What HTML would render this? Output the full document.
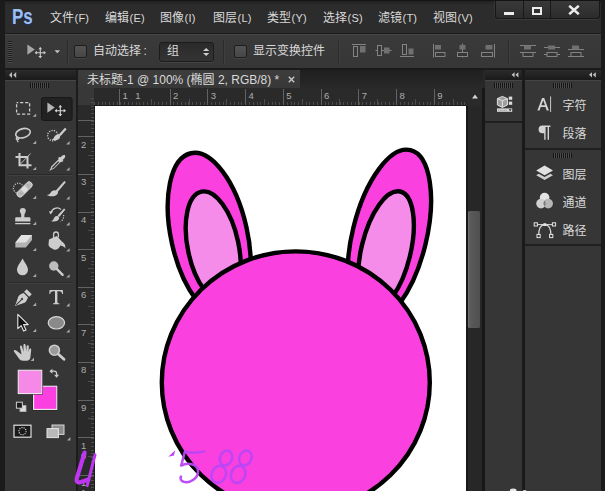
<!DOCTYPE html>
<html><head><meta charset="utf-8"><title>Photoshop</title><style>
html,body{margin:0;padding:0;}
body{width:605px;height:491px;overflow:hidden;background:#272727;position:relative;font-family:"Liberation Sans",sans-serif;font-size:12px;color:#d9d9d9;}
.a{position:absolute;}
svg{display:block;}
.cj{display:inline-block;vertical-align:top;font-family:"Liberation Sans","Noto Sans CJK SC",sans-serif;font-size:12px;color:#d9d9d9;}
.t{position:absolute;white-space:nowrap;line-height:14px;height:14px;}
.t span{display:inline-block;vertical-align:top;line-height:14px;}
.rl{position:absolute;font-size:9.5px;line-height:10px;color:#adadad;}
.cb{position:absolute;width:13px;height:13px;box-sizing:border-box;border:1px solid #1e1e1e;background:linear-gradient(#545454,#464646);border-radius:2px;box-shadow:0 1px 0 #444;}
</style></head><body>
<div class="a" style="left:0;top:0;width:605px;height:34px;background:linear-gradient(#1f1f1f,#2c2c2c 5px,#2c2c2c);"></div>
<div class="a" style="left:0;top:0;width:605px;height:1px;background:#141414;"></div>
<div class="a" style="left:5px;top:34px;width:596px;height:35px;background:linear-gradient(#3a3a3a,#363636);"></div>
<div class="a" style="left:0px;top:33px;width:605px;height:1px;background:#1a1a1a;"></div>
<div class="a" style="left:5px;top:34px;width:596px;height:1px;background:#474747;"></div>
<div class="a" style="left:0;top:68px;width:605px;height:2px;background:#1a1a1a;"></div>
<div class="a" style="left:0;top:0;width:5px;height:491px;background:#1b1b1b;"></div>
<div class="a" style="left:601px;top:0;width:4px;height:491px;background:#1b1b1b;"></div>
<div class="t" style="left:11.5px;top:4.5px;font-size:22px;font-weight:bold;color:#9cc0ee;text-shadow:1px 0.5px 0 #1c2e74;line-height:24px;height:24px;transform:scaleX(0.77);transform-origin:0 0;">Ps</div>
<div class="t" style="left:50px;top:11px;"><span class="cj">文件</span><span style="font-size:11px;letter-spacing:0.2px;padding-left:0.5px;">(F)</span></div>
<div class="t" style="left:105px;top:11px;"><span class="cj">编辑</span><span style="font-size:11px;letter-spacing:0.2px;padding-left:0.5px;">(E)</span></div>
<div class="t" style="left:160px;top:11px;"><span class="cj">图像</span><span style="font-size:11px;letter-spacing:0.2px;padding-left:0.5px;">(I)</span></div>
<div class="t" style="left:213px;top:11px;"><span class="cj">图层</span><span style="font-size:11px;letter-spacing:0.2px;padding-left:0.5px;">(L)</span></div>
<div class="t" style="left:267px;top:11px;"><span class="cj">类型</span><span style="font-size:11px;letter-spacing:0.2px;padding-left:0.5px;">(Y)</span></div>
<div class="t" style="left:323px;top:11px;"><span class="cj">选择</span><span style="font-size:11px;letter-spacing:0.2px;padding-left:0.5px;">(S)</span></div>
<div class="t" style="left:378px;top:11px;"><span class="cj">滤镜</span><span style="font-size:11px;letter-spacing:0.2px;padding-left:0.5px;">(T)</span></div>
<div class="t" style="left:433px;top:11px;"><span class="cj">视图</span><span style="font-size:11px;letter-spacing:0.2px;padding-left:0.5px;">(V)</span></div>
<div class="a" style="left:495px;top:1px;width:105px;height:18px;background:linear-gradient(#393939,#2c2c2c);border:1px solid #171717;border-top:none;border-radius:0 0 3px 3px;box-sizing:border-box;box-shadow:0 1px 0 #3a3a3a,-1px 0 0 #353535;"></div>
<div class="a" style="left:523px;top:1px;width:1px;height:17px;background:#181818;"></div>
<div class="a" style="left:550px;top:1px;width:1px;height:17px;background:#181818;"></div>
<div class="a" style="left:504px;top:12px;width:10px;height:3px;background:#ececec;"></div>
<div class="a" style="left:532px;top:7px;width:10px;height:8px;border:2px solid #ececec;box-sizing:border-box;"></div>
<svg class="a" style="left:568px;top:5px;" width="12" height="10" viewBox="0 0 12 10"><path d="M1.2 0.8 L10.8 9.2 M10.8 0.8 L1.2 9.2" stroke="#ececec" stroke-width="2.5" fill="none"/></svg>
<div class="a" style="left:8px;top:41px;width:4px;height:22px;background:repeating-linear-gradient(#1f1f1f 0,#1f1f1f 1px,#4a4a4a 1px,#4a4a4a 2px);"></div>
<div class="a" style="left:67px;top:40px;width:1px;height:24px;background:#2b2b2b;"></div>
<div class="a" style="left:68px;top:40px;width:1px;height:24px;background:#3f3f3f;"></div>
<div class="cb" style="left:74px;top:45px;"></div>
<div class="t" style="left:93px;top:44px;"><span class="cj">自动选择</span><span style="padding-left:2.5px;">:</span></div>
<div class="a" style="left:159px;top:42px;width:55px;height:20px;box-sizing:border-box;border:1px solid #1c1c1c;border-radius:3px;background:linear-gradient(#2a2a2a,#343434);box-shadow:0 1px 0 #444;"></div>
<div class="t" style="left:167px;top:44px;"><span class="cj">组</span></div>
<svg class="a" style="left:203px;top:48px;" width="6.4" height="8" viewBox="0 0 6.4 8"><path d="M3.2 0 L6.4 3 H0Z M3.2 8 L6.4 5 H0Z" fill="#cfcfcf"/></svg>
<div class="a" style="left:223px;top:40px;width:1px;height:24px;background:#2b2b2b;"></div>
<div class="a" style="left:224px;top:40px;width:1px;height:24px;background:#3f3f3f;"></div>
<div class="cb" style="left:234px;top:45px;"></div>
<div class="t" style="left:253px;top:44px;"><span class="cj">显示变换控件</span></div>
<div class="a" style="left:338px;top:40px;width:1px;height:24px;background:#2b2b2b;"></div>
<div class="a" style="left:339px;top:40px;width:1px;height:24px;background:#3f3f3f;"></div>
<div class="a" style="left:508px;top:40px;width:1px;height:24px;background:#2b2b2b;"></div>
<div class="a" style="left:509px;top:40px;width:1px;height:24px;background:#3f3f3f;"></div>
<div class="a" style="left:5px;top:70px;width:71px;height:421px;background:#363636;"></div>
<div class="a" style="left:5px;top:70px;width:71px;height:10px;background:linear-gradient(#2b2b2b,#1a1a1a);"></div>
<div class="a" style="left:76px;top:70px;width:2px;height:421px;background:#1c1c1c;"></div>
<div class="a" style="left:5px;top:80px;width:71px;height:1px;background:#454545;"></div>
<div class="a" style="left:30px;top:83px;width:19px;height:5px;background:repeating-linear-gradient(90deg,#141414 0,#141414 1px,#4c4c4c 1px,#4c4c4c 2px);"></div>
<div class="a" style="left:8px;top:174px;width:65px;height:1px;background:#2a2a2a;"></div>
<div class="a" style="left:8px;top:175px;width:65px;height:1px;background:#414141;"></div>
<div class="a" style="left:8px;top:282px;width:65px;height:1px;background:#2a2a2a;"></div>
<div class="a" style="left:8px;top:283px;width:65px;height:1px;background:#414141;"></div>
<div class="a" style="left:8px;top:338px;width:65px;height:1px;background:#2a2a2a;"></div>
<div class="a" style="left:8px;top:339px;width:65px;height:1px;background:#414141;"></div>
<div class="a" style="left:78px;top:70px;width:405px;height:18px;background:linear-gradient(#1f1f1f,#292929);"></div>
<div class="a" style="left:78px;top:70px;width:222px;height:18px;background:linear-gradient(#3d3d3d,#383838);"></div>
<div class="t" style="left:87px;top:72.6px;"><span class="cj">未标题</span><span>-1 @ 100% (</span><span class="cj">椭圆</span><span>&nbsp;2, RGB/8) *</span></div>
<svg class="a" style="left:288px;top:75.5px;" width="7" height="7" viewBox="0 0 7 7"><path d="M0.8 0.8 L6.2 6.2 M6.2 0.8 L0.8 6.2" stroke="#cacaca" stroke-width="1.3" fill="none"/></svg>
<div class="a" style="left:78px;top:88px;width:388px;height:17px;background:#2a2a2a;"></div>
<div class="a" style="left:78px;top:105px;width:16px;height:386px;background:#2a2a2a;"></div>
<div class="a" style="left:78px;top:88px;width:16px;height:17px;background:#383838;"></div>
<div class="a" style="left:94px;top:102px;width:372px;height:3px;background:repeating-linear-gradient(90deg,#4c4c4c 0,#4c4c4c 1px,transparent 1px,transparent 3.78px);"></div>
<div class="a" style="left:91px;top:98.4px;width:3px;height:393px;background:repeating-linear-gradient(#4c4c4c 0,#4c4c4c 1px,transparent 1px,transparent 3.78px);"></div>
<div class="rl" style="left:135.3px;top:91px;">1</div>
<div class="a" style="left:150.7px;top:99px;width:1px;height:6px;background:#4c4c4c;"></div>
<div class="a" style="left:169.6px;top:89px;width:1px;height:16px;background:#626262;"></div>
<div class="rl" style="left:173.1px;top:91px;">2</div>
<div class="a" style="left:188.5px;top:99px;width:1px;height:6px;background:#4c4c4c;"></div>
<div class="a" style="left:207.3px;top:89px;width:1px;height:16px;background:#626262;"></div>
<div class="rl" style="left:210.8px;top:91px;">3</div>
<div class="a" style="left:226.2px;top:99px;width:1px;height:6px;background:#4c4c4c;"></div>
<div class="a" style="left:245.1px;top:89px;width:1px;height:16px;background:#626262;"></div>
<div class="rl" style="left:248.6px;top:91px;">4</div>
<div class="a" style="left:263.9px;top:99px;width:1px;height:6px;background:#4c4c4c;"></div>
<div class="a" style="left:282.8px;top:89px;width:1px;height:16px;background:#626262;"></div>
<div class="rl" style="left:286.3px;top:91px;">5</div>
<div class="a" style="left:301.7px;top:99px;width:1px;height:6px;background:#4c4c4c;"></div>
<div class="a" style="left:320.6px;top:89px;width:1px;height:16px;background:#626262;"></div>
<div class="rl" style="left:324.1px;top:91px;">6</div>
<div class="a" style="left:339.4px;top:99px;width:1px;height:6px;background:#4c4c4c;"></div>
<div class="a" style="left:358.3px;top:89px;width:1px;height:16px;background:#626262;"></div>
<div class="rl" style="left:361.8px;top:91px;">7</div>
<div class="a" style="left:377.2px;top:99px;width:1px;height:6px;background:#4c4c4c;"></div>
<div class="a" style="left:396.1px;top:89px;width:1px;height:16px;background:#626262;"></div>
<div class="rl" style="left:399.6px;top:91px;">8</div>
<div class="a" style="left:414.9px;top:99px;width:1px;height:6px;background:#4c4c4c;"></div>
<div class="a" style="left:433.8px;top:89px;width:1px;height:16px;background:#626262;"></div>
<div class="rl" style="left:437.3px;top:91px;">9</div>
<div class="a" style="left:452.7px;top:99px;width:1px;height:6px;background:#4c4c4c;"></div>
<div class="a" style="left:119.4px;top:89px;width:1px;height:16px;background:#626262;"></div>
<div class="rl" style="left:122.5px;top:91px;">1</div>
<div class="a" style="left:78px;top:136.3px;width:16px;height:1px;background:#626262;"></div>
<div class="rl" style="left:81px;top:139.8px;">2</div>
<div class="a" style="left:88px;top:155.2px;width:6px;height:1px;background:#4c4c4c;"></div>
<div class="a" style="left:78px;top:173.9px;width:16px;height:1px;background:#626262;"></div>
<div class="rl" style="left:81px;top:177.4px;">3</div>
<div class="a" style="left:88px;top:192.8px;width:6px;height:1px;background:#4c4c4c;"></div>
<div class="a" style="left:78px;top:211.5px;width:16px;height:1px;background:#626262;"></div>
<div class="rl" style="left:81px;top:215.0px;">4</div>
<div class="a" style="left:88px;top:230.4px;width:6px;height:1px;background:#4c4c4c;"></div>
<div class="a" style="left:78px;top:249.1px;width:16px;height:1px;background:#626262;"></div>
<div class="rl" style="left:81px;top:252.6px;">5</div>
<div class="a" style="left:88px;top:268.0px;width:6px;height:1px;background:#4c4c4c;"></div>
<div class="a" style="left:78px;top:286.7px;width:16px;height:1px;background:#626262;"></div>
<div class="rl" style="left:81px;top:290.2px;">6</div>
<div class="a" style="left:88px;top:305.6px;width:6px;height:1px;background:#4c4c4c;"></div>
<div class="a" style="left:78px;top:324.3px;width:16px;height:1px;background:#626262;"></div>
<div class="rl" style="left:81px;top:327.8px;">7</div>
<div class="a" style="left:88px;top:343.2px;width:6px;height:1px;background:#4c4c4c;"></div>
<div class="a" style="left:78px;top:361.9px;width:16px;height:1px;background:#626262;"></div>
<div class="rl" style="left:81px;top:365.4px;">8</div>
<div class="a" style="left:88px;top:380.8px;width:6px;height:1px;background:#4c4c4c;"></div>
<div class="a" style="left:78px;top:399.5px;width:16px;height:1px;background:#626262;"></div>
<div class="rl" style="left:81px;top:403.0px;">9</div>
<div class="a" style="left:88px;top:418.4px;width:6px;height:1px;background:#4c4c4c;"></div>
<div class="a" style="left:78px;top:437.1px;width:16px;height:1px;background:#626262;"></div>
<div class="rl" style="left:81px;top:440.6px;">1</div>
<div class="rl" style="left:81px;top:450.6px;">0</div>
<div class="a" style="left:88px;top:456.0px;width:6px;height:1px;background:#4c4c4c;"></div>
<div class="a" style="left:78px;top:474.7px;width:16px;height:1px;background:#626262;"></div>
<div class="rl" style="left:81px;top:478.2px;">1</div>
<div class="rl" style="left:81px;top:488.2px;">1</div>
<div class="a" style="left:88px;top:493.6px;width:6px;height:1px;background:#4c4c4c;"></div>
<div class="a" style="left:78px;top:120.4px;width:16px;height:1px;background:#626262;"></div>
<div class="a" style="left:93.6px;top:104.7px;width:372.2px;height:387px;background:#1b1b1b;"></div>
<div class="a" style="left:94.6px;top:105.7px;width:371.2px;height:386px;background:#fff;"></div>
<div class="a" style="left:465.8px;top:88px;width:19.2px;height:403px;background:#181818;"></div>
<div class="a" style="left:467.8px;top:88px;width:14.7px;height:403px;background:#272727;"></div>
<div class="a" style="left:465.8px;top:88px;width:16.7px;height:17.5px;background:#2a2a2a;"></div>
<svg class="a" style="left:472px;top:93.8px;" width="6" height="5" viewBox="0 0 6 5"><path d="M3 0.6 L6 4.4 H0Z" fill="#d4d4d4"/></svg>
<div class="a" style="left:468px;top:211px;width:12px;height:117px;background:linear-gradient(90deg,#717171,#5a5a5a 18%,#505050);border-radius:1.5px;"></div>
<div class="a" style="left:485px;top:70px;width:36.5px;height:421px;background:#363636;"></div>
<div class="a" style="left:485px;top:70px;width:36.5px;height:10px;background:linear-gradient(#2b2b2b,#1a1a1a);"></div>
<div class="a" style="left:521.5px;top:70px;width:3.5px;height:421px;background:#1a1a1a;"></div>
<div class="a" style="left:525px;top:70px;width:76px;height:421px;background:#363636;"></div>
<div class="a" style="left:525px;top:70px;width:76px;height:10px;background:linear-gradient(#2b2b2b,#1a1a1a);"></div>
<div class="a" style="left:485.0px;top:80px;width:36.5px;height:1px;background:#454545;"></div>
<div class="a" style="left:525.0px;top:80px;width:76.0px;height:1px;background:#454545;"></div>
<div class="a" style="left:494px;top:83px;width:19px;height:5px;background:repeating-linear-gradient(90deg,#141414 0,#141414 1px,#4c4c4c 1px,#4c4c4c 2px);"></div>
<div class="a" style="left:553px;top:83px;width:19px;height:5px;background:repeating-linear-gradient(90deg,#141414 0,#141414 1px,#4c4c4c 1px,#4c4c4c 2px);"></div>
<div class="a" style="left:553px;top:152.5px;width:19px;height:5px;background:repeating-linear-gradient(90deg,#141414 0,#141414 1px,#4c4c4c 1px,#4c4c4c 2px);"></div>
<div class="a" style="left:485px;top:121px;width:36.5px;height:2px;background:#1f1f1f;"></div>
<div class="a" style="left:525px;top:148px;width:76px;height:2px;background:#1f1f1f;"></div>
<div class="a" style="left:525px;top:244px;width:76px;height:2px;background:#1f1f1f;"></div>
<div class="t" style="left:562.5px;top:99px;"><span class="cj">字符</span></div>
<div class="t" style="left:562.5px;top:127px;"><span class="cj">段落</span></div>
<div class="t" style="left:562.5px;top:168px;"><span class="cj">图层</span></div>
<div class="t" style="left:562.5px;top:196px;"><span class="cj">通道</span></div>
<div class="t" style="left:562.5px;top:224px;"><span class="cj">路径</span></div>
<svg class="a" style="left:94px;top:105px;" width="371.8" height="386" viewBox="94 105 371.8 386">
<g stroke="#000" stroke-width="4.4">
<ellipse cx="209.2" cy="235.4" rx="38.1" ry="84.2" fill="#fb40e0" transform="rotate(-12.6 209.2 235.4)"/>
<ellipse cx="213.2" cy="246.8" rx="25.4" ry="56.4" fill="#f68ce9" transform="rotate(-12 213.2 246.8)"/>
<ellipse cx="389.4" cy="236.1" rx="37" ry="88.5" fill="#fb40e0" transform="rotate(13.8 389.4 236.1)"/>
<ellipse cx="386" cy="250.4" rx="24.6" ry="60.6" fill="#f68ce9" transform="rotate(13.6 386 250.4)"/>
<ellipse cx="295.8" cy="382.4" rx="134" ry="131" fill="#fb40e0"/>
</g></svg>
<svg class="a" style="left:0;top:0;" width="605" height="491" viewBox="0 0 605 491">
<path d="M27.4 44.4 v10.4 l7.4 -5.2z" fill="#a6a6a6"/><path d="M35.3 52.7 h10 M40.3 47.7 v10" stroke="#cccccc" stroke-width="1.1" fill="none"/><path d="M40.3 47.1 l1.9 2.2 h-3.8z M40.3 58.300000000000004 l1.9 -2.2 h-3.8z M34.699999999999996 52.7 l2.2 -1.9 v3.8z M45.9 52.7 l-2.2 -1.9 v3.8z" fill="#cccccc"/><path d="M54.5 50.2 h5.6 l-2.8 3z" fill="#c4c4c4"/><path d="M352 44.5 h14" fill="none" stroke="#838383" stroke-width="1"/><rect x="353.5" y="46.5" width="4" height="10" fill="none" stroke="#838383" stroke-width="1"/><rect x="360" y="46" width="5.5" height="6.5" fill="#707070"/><path d="M375.5 50.5 h16" fill="none" stroke="#838383" stroke-width="1"/><rect x="377.5" y="45.5" width="4" height="10" fill="#363636" stroke="#838383"/><rect x="384" y="47.5" width="5.5" height="6" fill="#707070"/><path d="M400 56.5 h14" fill="none" stroke="#838383" stroke-width="1"/><rect x="402.5" y="44.5" width="4" height="10" fill="none" stroke="#838383" stroke-width="1"/><rect x="408.5" y="48.5" width="5" height="6" fill="#707070"/><path d="M433.5 44 v13.5" fill="none" stroke="#838383" stroke-width="1"/><rect x="435" y="45" width="6" height="4.5" fill="#707070"/><rect x="435.5" y="52.5" width="9.5" height="4" fill="none" stroke="#838383" stroke-width="1"/><path d="M462.5 43.5 v14" fill="none" stroke="#838383" stroke-width="1"/><rect x="459.5" y="45" width="6" height="4.5" fill="#707070"/><rect x="457.5" y="52.5" width="10" height="4" fill="#363636" stroke="#838383"/><path d="M494.5 44 v13.5" fill="none" stroke="#838383" stroke-width="1"/><rect x="485.5" y="45" width="7" height="4.5" fill="#707070"/><rect x="481.5" y="52.5" width="11" height="4" fill="none" stroke="#838383" stroke-width="1"/><path d="M520 45.5 h16 M520 52.5 h16" fill="none" stroke="#838383" stroke-width="1"/><rect x="524" y="45.5" width="7" height="4" fill="#707070"/><rect x="523.0" y="52.5" width="10" height="4" fill="#363636" stroke="#838383"/><path d="M544 47.5 h16 M544 54.5 h16" fill="none" stroke="#838383" stroke-width="1"/><rect x="548" y="45.5" width="7" height="4" fill="#707070"/><rect x="547.0" y="52.5" width="10" height="4" fill="#363636" stroke="#838383"/><path d="M568 49.5 h16 M568 56.5 h16" fill="none" stroke="#838383" stroke-width="1"/><rect x="572" y="45.5" width="7" height="4" fill="#707070"/><rect x="571.0" y="52.5" width="10" height="4" fill="#363636" stroke="#838383"/>
<path d="M9 75 l3 -3 v6z M13.2 75 l3 -3 v6z" fill="#bdbdbd"/><rect x="41.5" y="97.5" width="30.6" height="23" rx="2" fill="#222222" stroke="#181818"/><rect x="16.6" y="102.6" width="13" height="11.6" fill="none" stroke="#cdcdcd" stroke-width="1.3" stroke-dasharray="3.2 1.9" stroke-dashoffset="1.6"/><path d="M47.4 102.4 v10.4 l7.4 -5.2z" fill="#b4b4b4"/><path d="M55.3 110.7 h10 M60.3 105.7 v10" stroke="#d6d6d6" stroke-width="1.1" fill="none"/><path d="M60.3 105.10000000000001 l1.9 2.2 h-3.8z M60.3 116.3 l1.9 -2.2 h-3.8z M54.699999999999996 110.7 l2.2 -1.9 v3.8z M65.89999999999999 110.7 l-2.2 -1.9 v3.8z" fill="#d6d6d6"/><g fill="none" stroke="#cdcdcd" stroke-width="1.6"><ellipse cx="23" cy="133.2" rx="7.5" ry="4.5" transform="rotate(-16 23 133.2)"/><path d="M17 137.2 c-1.6 1.2 -0.6 3 1 2.4 c1.4 -0.6 0.6 -2.4 -0.8 -1.6 c-0.8 0.8 0 2.8 1.2 4.2" stroke-width="1.2"/></g><circle cx="52.8" cy="135.6" r="5.2" fill="none" stroke="#cdcdcd" stroke-width="1.3" stroke-dasharray="1.2 1.3"/><path d="M66.6 129.2 l-1.6 -1.4 l-6.2 6.6 l1.8 1.6z" fill="#cdcdcd"/><path d="M58.4 134.4 c-2.4 -0.2 -3.8 1.4 -4.4 3.2 c-0.4 1.2 -1.4 1.8 -2.8 2 c3 1.4 7 1 8.6 -1.6 c0.6 -1.2 0.4 -2.6 -0.4 -3.4z" fill="#cdcdcd"/><path d="M19.5 153 v12.2 h12 M15.5 157 h12 v11.6" fill="none" stroke="#cdcdcd" stroke-width="2"/><path d="M30.5 153.6 l-10.6 11" stroke="#cdcdcd" stroke-width="0.9"/><path d="M64.4 154.4 c1.2 1.2 1 2.8 -0.2 4 l-1.6 1.6 l0.8 0.8 l-1.4 1.4 l-0.8 -0.8 l-7.6 7.6 l-2.4 0.8 l-1.2 1 l-0.6 -0.6 l1 -1.2 l0.8 -2.4 l7.6 -7.6 l-0.8 -0.8 l1.4 -1.4 l0.8 0.8 l1.6 -1.6 c1.2 -1.2 2.8 -1.4 3.6 -0.6z" fill="#cdcdcd"/><path d="M58.2 161.2 l-6 6 l-0.5 1.6 l1.6 -0.5 l6 -6z" fill="#3a3a3a"/><circle cx="18.4" cy="188.2" r="5" fill="none" stroke="#cdcdcd" stroke-width="1.2" stroke-dasharray="1.1 1.3"/><g transform="rotate(-45 24.5 189.4)"><rect x="15" y="186.4" width="19" height="6.2" rx="3" fill="#bcbcbc" stroke="#e0e0e0" stroke-width="0.8"/><rect x="22" y="186.8" width="5" height="5.4" fill="#dedede"/><path d="M17 188.5 h3 M17.5 190.5 h3 M29 188.5 h3 M28.5 190.5 h3" stroke="#777" stroke-width="0.7" stroke-dasharray="0.8 0.8"/></g><path d="M65.8 182.2 l-1.5 -1.3 l-8.4 9.6 l1.7 1.5z" fill="#cdcdcd"/><path d="M55.8 190.4 c-2.4 -0.5 -4.4 0.7 -5.2 2.4 c-0.6 1.3 -1.8 2 -3.8 2.2 c3.4 2 8.8 1.8 10.8 -1.3 c0.8 -1.2 0.4 -2.6 -0.5 -3.4z" fill="#cdcdcd"/><path d="M22.8 208 a3 3 0 0 1 3 3 c0 1.6 -1.4 2.4 -1.4 4.2 v2 h5 a1 1 0 0 1 1 1 v3.2 h-15.2 v-3.2 a1 1 0 0 1 1 -1 h5 v-2 c0 -1.8 -1.4 -2.6 -1.4 -4.2 a3 3 0 0 1 3 -3z" fill="#cdcdcd"/><path d="M15.2 223.6 h15.2" stroke="#cdcdcd" stroke-width="1.3"/><path d="M65.4 209.6 l-1.4 -1.2 l-6.4 7.2 l1.6 1.4z" fill="#cdcdcd"/><path d="M57 216 c-2 0 -3 1.5 -3.4 3 c-0.3 1.1 -1.2 1.7 -2.6 1.9 c2.6 1.2 6.4 0.8 7.8 -1.6 c0.6 -1.1 0.2 -2.3 -0.6 -3z" fill="#cdcdcd"/><path d="M51 213 a6.2 6.2 0 0 1 10 -3.6" fill="none" stroke="#cdcdcd" stroke-width="1.3"/><path d="M49 211.2 l4 0.2 l-2.6 3.2z" fill="#cdcdcd"/><path d="M63.6 215 a6.4 6.4 0 0 1 -3 6.6" fill="none" stroke="#cdcdcd" stroke-width="1.2" stroke-dasharray="1.2 1.2"/><path d="M21.4 235 h10.6 v5 l-6.2 7.6 h-10.4 v-5z" fill="#b4b4b4"/><path d="M21.4 235 h10.6 l-6.2 7.6 h-10.4z" fill="#e2e2e2"/><path d="M49 239.6 l7.8 -3.6 l6 6.4 l-4.4 6.2 c-1.2 1.2 -3 1.4 -4.6 0.8 l-3.6 -2 c-1.4 -1 -2 -2.6 -1.6 -4.2z" fill="#cdcdcd"/><path d="M53.6 239 v-4.6 a2.4 2.4 0 0 1 4.8 0 v3" fill="none" stroke="#cdcdcd" stroke-width="1.3"/><path d="M62 242 c2 0.6 3.6 2.6 3.4 6.2 c-1.4 -1.6 -2.6 -2.2 -4.6 -2.4z" fill="#cdcdcd"/><path d="M22.6 258.4 c1.6 3.6 5.4 7.4 5.4 11.4 a5.5 5.5 0 0 1 -11 0 c0 -4 3.8 -7.8 5.6 -11.4z" fill="#cdcdcd"/><circle cx="53.8" cy="266" r="4.7" fill="#bdbdbd"/><path d="M57 269.2 l5.6 5.6" stroke="#cdcdcd" stroke-width="2.4" stroke-linecap="round"/><g transform="rotate(45 24 297)"><path d="M24 309.6 l-4.4 -9 c-0.6 -2 0.4 -4.4 1.4 -6.2 h6 c1 1.8 2 4.2 1.4 6.2z" fill="#cdcdcd"/><path d="M24 308 v-7.4" stroke="#363636" stroke-width="1"/><circle cx="24" cy="299.8" r="1.1" fill="#363636"/><rect x="20.4" y="289.6" width="7.2" height="3.6" fill="#cdcdcd"/></g><path d="M49.6 290 h13.2 l0.3 4 h-0.9 c-0.3 -2 -1 -2.8 -3 -2.8 h-1.8 v10.6 c0 1.2 0.5 1.5 2 1.6 v0.8 h-6.4 v-0.8 c1.5 -0.1 2 -0.4 2 -1.6 v-10.6 h-1.8 c-2 0 -2.7 0.8 -3 2.8 h-0.9z" fill="#cdcdcd"/><path d="M17.8 314.4 v14.2 l3.4 -3 l2.4 5.4 l2.4 -1 l-2.4 -5.4 h4.6z" fill="#141414" stroke="#e6e6e6" stroke-width="1.1" stroke-linejoin="round"/><ellipse cx="56.4" cy="322.8" rx="8.2" ry="6.2" fill="#8a8a8a" stroke="#d8d8d8" stroke-width="1.2"/><path d="M17.6 351.6 c-1.2 -1.4 -2.8 -2.2 -3.6 -1.4 c-0.6 0.8 0.4 1.8 1.4 3.2 l3.6 5.2 c1 1.4 2.2 2.2 4 2.2 h3.6 c2.2 0 3.6 -1.4 3.8 -3.6 l0.8 -7.2 c0.2 -1.6 -1.6 -2 -2 -0.4 l-0.6 3 l0.2 -6.2 c0 -1.6 -2 -1.6 -2.2 0 l-0.4 5.2 l-0.6 -6.6 c-0.2 -1.6 -2.2 -1.4 -2.2 0.2 l0.2 6.6 l-1.6 -5.4 c-0.4 -1.6 -2.4 -1 -2 0.6 l1.6 7.4z" fill="#cdcdcd"/><circle cx="54.4" cy="350.2" r="5" fill="#9a9a9a" stroke="#cdcdcd" stroke-width="1.6"/><path d="M58.4 354.2 l5.6 5" stroke="#cdcdcd" stroke-width="2.8" stroke-linecap="round"/><path d="M36.2 116.8 v-3.4 l-3.4 3.4z" fill="#a9a9a9"/><path d="M36.2 143.9 v-3.4 l-3.4 3.4z" fill="#a9a9a9"/><path d="M69.6 144.4 v-3.4 l-3.4 3.4z" fill="#a9a9a9"/><path d="M36.2 170.1 v-3.4 l-3.4 3.4z" fill="#a9a9a9"/><path d="M69.6 170.6 v-3.4 l-3.4 3.4z" fill="#a9a9a9"/><path d="M36.2 198.9 v-3.4 l-3.4 3.4z" fill="#a9a9a9"/><path d="M69.6 199.4 v-3.4 l-3.4 3.4z" fill="#a9a9a9"/><path d="M36.2 224.9 v-3.4 l-3.4 3.4z" fill="#a9a9a9"/><path d="M69.6 225.4 v-3.4 l-3.4 3.4z" fill="#a9a9a9"/><path d="M36.2 251.1 v-3.4 l-3.4 3.4z" fill="#a9a9a9"/><path d="M69.6 251.6 v-3.4 l-3.4 3.4z" fill="#a9a9a9"/><path d="M36.2 277.1 v-3.4 l-3.4 3.4z" fill="#a9a9a9"/><path d="M69.6 277.6 v-3.4 l-3.4 3.4z" fill="#a9a9a9"/><path d="M36.2 305.9 v-3.4 l-3.4 3.4z" fill="#a9a9a9"/><path d="M69.6 306.4 v-3.4 l-3.4 3.4z" fill="#a9a9a9"/><path d="M36.2 332.1 v-3.4 l-3.4 3.4z" fill="#a9a9a9"/><path d="M69.6 332.6 v-3.4 l-3.4 3.4z" fill="#a9a9a9"/><path d="M34.0 361.0 v-3.4 l-3.4 3.4z" fill="#a9a9a9"/><rect x="32.6" y="385.2" width="25.2" height="25.2" fill="#1c1c1c"/><rect x="33.6" y="386.2" width="23.2" height="23.2" fill="#fb3fe1" stroke="#ededed" stroke-width="1.1"/><rect x="17.2" y="369.2" width="25.6" height="25.4" fill="#1c1c1c"/><rect x="18.2" y="370.2" width="23.6" height="23.4" fill="#f688e8" stroke="#ededed" stroke-width="1.1"/><path d="M51.6 371.2 h2.6 a2.4 2.4 0 0 1 2.4 2.4 v2" fill="none" stroke="#cdcdcd" stroke-width="1.2"/><path d="M49.4 371.2 l3 -2.5 v5z M56.6 377.8 l-2.5 -3 h5z" fill="#cdcdcd"/><rect x="20" y="405.6" width="6" height="6" fill="#dcdcdc" stroke="#b4b4b4" stroke-width="0.8"/><rect x="16.4" y="402.2" width="6" height="6" fill="#1c1c1c" stroke="#cfcfcf" stroke-width="1"/><rect x="14" y="425.2" width="17" height="12" fill="#1a1a1a" stroke="#e0e0e0" stroke-width="1.2"/><circle cx="22.5" cy="431.2" r="3.6" fill="none" stroke="#e8e8e8" stroke-width="1.1" stroke-dasharray="1.1 1.1"/><rect x="52" y="425" width="12" height="9.4" fill="#8c8c8c" stroke="#d6d6d6" stroke-width="1"/><rect x="47" y="428.6" width="11.4" height="9" fill="#b9b9b9" stroke="#e4e4e4" stroke-width="1"/><path d="M70.4 440.4 v-3.4 l-3.4 3.4z" fill="#a9a9a9"/>
<path d="M511.6 74.8 l3 -2.6 v5.2z M515.4 74.8 l3 -2.6 v5.2z" fill="#c2c2c2"/><path d="M589 74.8 l3 -2.6 v5.2z M592.8 74.8 l3 -2.6 v5.2z" fill="#c2c2c2"/><path d="M502.4 96.4 l5 2.2 v6.4 l-5 2.4 l-5 -2.4 v-6.4z" fill="#9d9d9d" stroke="#e2e2e2" stroke-width="1"/><path d="M497.4 98.6 l5 2.2 l5 -2.2 M502.4 100.8 v6.6" fill="none" stroke="#e2e2e2" stroke-width="1"/><rect x="508.8" y="96.6" width="3.4" height="3.2" fill="#dcdcdc"/><rect x="508.8" y="101.6" width="3.4" height="3.2" fill="#dcdcdc"/><rect x="497" y="108.4" width="15.2" height="3.4" fill="#dcdcdc"/><path d="M508.6 109.2 h3 l-1.5 2z" fill="#222"/><path d="M498.4 110.2 h8.6" stroke="#777" stroke-width="1" stroke-dasharray="1 1"/><path d="M537.4 110.4 l4.7 -12.4 h2.1 l4.7 12.4 h-2.2 l-1.2 -3.4 h-4.8 l-1.2 3.4z M541.4 105.2 h3.6 l-1.8 -5z" fill="#d4d4d4" fill-rule="evenodd"/><path d="M550.6 96.4 v15.6" stroke="#c8c8c8" stroke-width="1"/><path d="M542.4 125.6 h8 v1.4 h-1.4 v12.8 h-1.4 v-12.8 h-2 v12.8 h-1.4 v-6.6 h-1.8 a3.8 3.8 0 0 1 0 -7.6z" fill="#d4d4d4"/><path d="M544.6 165.6 l8.4 4.8 l-8.4 4.8 l-8.4 -4.8z" fill="#e2e2e2"/><path d="M536.2 175.2 l2.6 -1.5 l5.8 3.3 l5.8 -3.3 l2.6 1.5 l-8.4 4.8z" fill="#cfcfcf"/><circle cx="544.6" cy="197.6" r="4.8" fill="#e4e4e4"/><circle cx="541" cy="203.6" r="4.8" fill="#d0d0d0"/><circle cx="548.2" cy="203.6" r="4.8" fill="#b6b6b6"/><path d="M544.6 200.6 a4.8 4.8 0 0 1 0 5.8 a4.8 4.8 0 0 1 0 -5.8z" fill="#7d7d7d"/><path d="M538.6 236 c0 -7.4 2.2 -11.4 6.2 -11.4 c4 0 6.2 4 6.2 11.4" fill="none" stroke="#dcdcdc" stroke-width="1.2"/><path d="M535.6 224.6 h18.4" stroke="#dcdcdc" stroke-width="1"/><rect x="534.2" y="222.8" width="3.2" height="3.2" fill="#363636" stroke="#e4e4e4" stroke-width="1"/><rect x="552.4" y="222.8" width="3.2" height="3.2" fill="#363636" stroke="#e4e4e4" stroke-width="1"/><rect x="537.0" y="234.4" width="3.2" height="3.2" fill="#363636" stroke="#e4e4e4" stroke-width="1"/><rect x="549.6" y="234.4" width="3.2" height="3.2" fill="#363636" stroke="#e4e4e4" stroke-width="1"/><rect x="543.4" y="223.2" width="2.8" height="2.8" fill="#e4e4e4"/>
<path d="M84.6 452.6 L76.8 478.4 c-0.8 3 0.8 4.6 3.6 3.8 L88.4 479.6" fill="none" stroke="#bf36f2" stroke-width="4.2" stroke-linecap="round" stroke-linejoin="round"/><path d="M95 454.8 L87.2 485.6" fill="none" stroke="#bf36f2" stroke-width="3" stroke-linecap="round"/><path d="M168.2 456.8 L175.2 450.2 L174 455.4z" fill="#b947f6"/><g fill="none" stroke="#b947f6" stroke-width="2.5" stroke-linecap="round" stroke-linejoin="round" opacity="0.96"><path d="M204 451.4 C197 453.2 190.4 453 184.8 451.8 L181.2 465.6 C187.4 462 197.6 463.8 198 470.8 C198.4 478.2 190 483.6 183.6 481.8 C181 481 180 478.8 181 476.6"/><ellipse cx="226" cy="458" rx="6" ry="7.6" transform="rotate(24 226 458)"/><ellipse cx="218.8" cy="474.4" rx="7" ry="8.8" transform="rotate(24 218.8 474.4)"/><ellipse cx="245.4" cy="458" rx="6" ry="7.6" transform="rotate(24 245.4 458)"/><ellipse cx="238.2" cy="474.4" rx="7" ry="8.8" transform="rotate(24 238.2 474.4)"/></g><ellipse cx="513.2" cy="491" rx="3.4" ry="2.4" fill="#e6e6e6"/><ellipse cx="524.6" cy="491.3" rx="2" ry="1.4" fill="#d0d0d0"/>
</svg>
</body></html>
